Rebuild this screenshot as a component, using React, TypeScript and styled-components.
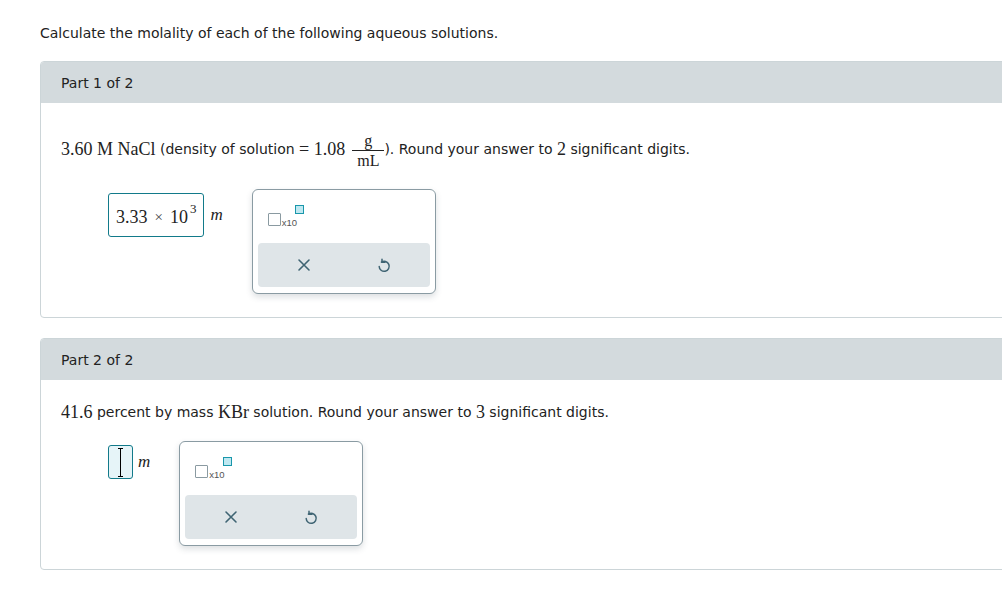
import React from "react";
import styled, { createGlobalStyle } from "styled-components";

const colors = {
  text: "#222",
  header: "#d3dadd",
  border: "#ccd5d8",
  teal: "#127a8a",
  icon: "#3f6473",
  paletteBorder: "#8a9ba3",
  bar: "#dfe5e8",
};

const GlobalStyle = createGlobalStyle`
  html, body {
    margin: 0;
    padding: 0;
    background: #fff;
  }
  body {
    font-family: "DejaVu Sans", Verdana, sans-serif;
    font-size: 14px;
    color: ${colors.text};
    overflow: hidden;
  }
`;

const Page = styled.div`
  width: 1002px;
  height: 598px;
  padding: 24px 0 0 40px;
  box-sizing: border-box;
  overflow: hidden;
`;

const Title = styled.p`
  margin: 0 0 19px;
  line-height: 18px;
`;

const Part = styled.section`
  width: 1000px;
  border: 1px solid ${colors.border};
  border-radius: 4px;
  overflow: hidden;
  margin-bottom: 20px;
`;

const PartHeader = styled.div`
  height: 41px;
  background: ${colors.header};
  display: flex;
  align-items: center;
  padding-left: 20px;
`;

const PartBody = styled.div<{ $top: number; $gap: number }>`
  padding: ${(p) => p.$top}px 20px 23px;
  display: flex;
  flex-direction: column;
  gap: ${(p) => p.$gap}px;
`;

const Question = styled.div`
  line-height: 20px;
  display: flex;
  align-items: center;
  white-space: pre;
`;

const Math = styled.span`
  font-family: "Liberation Serif", "Times New Roman", serif;
  font-size: 18px;
`;

const Fraction = styled.span`
  display: inline-flex;
  flex-direction: column;
  align-items: center;
  margin: 0 0 0 7px;
  font-family: "Liberation Serif", "Times New Roman", serif;
  position: relative;
  top: 2px;
`;

const Numer = styled.span`
  font-size: 16px;
  line-height: 18px;
  padding: 0 5px;
`;

const Denom = styled.span`
  font-size: 16px;
  line-height: 18px;
  padding: 1px 5px 0;
  border-top: 1px solid ${colors.text};
`;

const AnswerRow = styled.div`
  display: flex;
  align-items: flex-start;
  padding-left: 47px;
`;

const Field = styled.div`
  display: flex;
  align-items: center;
  margin-top: 4px;
  margin-right: 29px;
`;

const InputBox = styled.div<{ $active?: boolean }>`
  box-sizing: border-box;
  height: ${(p) => (p.$active ? 34 : 44)}px;
  min-width: 25px;
  padding: 0 ${(p) => (p.$active ? 0 : 7)}px;
  border: 1px solid ${colors.teal};
  border-radius: 3px;
  background: ${(p) => (p.$active ? "#e6f4f8" : "#fff")};
  display: flex;
  align-items: center;
  justify-content: center;
  font-family: "Liberation Serif", "Times New Roman", serif;
  font-size: 18px;
  line-height: 20px;
  padding-top: ${(p) => (p.$active ? 0 : 4)}px;
`;

const Times = styled.span`
  font-size: 15px;
  margin: 0 7px;
  color: #444;
`;

const Sup = styled.span`
  font-size: 13px;
  line-height: 13px;
  align-self: flex-start;
  margin-top: 4px;
  margin-left: 2px;
`;

const Cursor = styled.span`
  width: 5px;
  height: 29px;
  border-top: 1px solid #000;
  border-bottom: 1px solid #000;
  position: relative;
  box-sizing: border-box;

  &::after {
    content: "";
    position: absolute;
    left: 2px;
    top: 0;
    bottom: 0;
    width: 1px;
    background: #000;
  }
`;

const Unit = styled.span<{ $gap: number }>`
  font-family: "Liberation Serif", "Times New Roman", serif;
  font-style: italic;
  font-size: 17px;
  margin-left: ${(p) => p.$gap}px;
`;

const Palette = styled.div`
  box-sizing: border-box;
  width: 184px;
  height: 105px;
  border: 1px solid ${colors.paletteBorder};
  border-radius: 6px;
  box-shadow: 0 3px 6px rgba(60, 80, 90, 0.18);
  background: #fff;
  padding: 15px 5px 5px 5px;
  display: flex;
  flex-direction: column;
  gap: 17px;
`;

const SciButton = styled.div`
  display: flex;
  align-items: flex-end;
  height: 21px;
  padding-left: 10px;
`;

const BaseSquare = styled.span`
  width: 13px;
  height: 13px;
  box-sizing: border-box;
  border: 1.5px solid #8a9aa1;
  border-radius: 1px;
`;

const Ten = styled.span`
  font-family: "Liberation Sans", Arial, sans-serif;
  font-size: 9.5px;
  line-height: 9px;
  color: #555;
  margin-left: 1px;
  margin-bottom: -1px;
`;

const ExpSquare = styled.span`
  width: 9px;
  height: 9px;
  box-sizing: border-box;
  border: 1.5px solid #1997ab;
  background: #bfe8f1;
  align-self: flex-start;
  margin-left: -2px;
`;

const ActionBar = styled.div`
  height: 44px;
  background: ${colors.bar};
  border-radius: 4px;
  display: flex;
  align-items: center;
  justify-content: space-around;
  padding: 0 6px;
`;

const IconButton = styled.span`
  display: flex;
  align-items: center;
  justify-content: center;
  width: 20px;
  height: 20px;
  color: ${colors.icon};
`;

const ClearIcon = () => (
  <svg width="14" height="14" viewBox="0 0 14 14" fill="none">
    <path d="M2 2 L12 12 M12 2 L2 12" stroke="currentColor" strokeWidth="1.6" strokeLinecap="round" />
  </svg>
);

const UndoIcon = () => (
  <svg width="14" height="15" viewBox="0 0 14 15" fill="none">
    <path
      d="M4.4 4.2 A5 5 0 1 1 2.2 8.4"
      stroke="currentColor"
      strokeWidth="1.5"
      strokeLinecap="round"
    />
    <path d="M5 1.2 V4.3 H8" stroke="currentColor" strokeWidth="1.5" strokeLinecap="round" strokeLinejoin="round" />
  </svg>
);

const ToolPalette = () => (
  <Palette>
    <SciButton>
      <BaseSquare />
      <Ten>x10</Ten>
      <ExpSquare />
    </SciButton>
    <ActionBar>
      <IconButton>
        <ClearIcon />
      </IconButton>
      <IconButton>
        <UndoIcon />
      </IconButton>
    </ActionBar>
  </Palette>
);

const App = () => (
  <>
    <GlobalStyle />
    <Page>
      <Title>Calculate the molality of each of the following aqueous solutions.</Title>

      <Part>
        <PartHeader>Part 1 of 2</PartHeader>
        <PartBody $top={27} $gap={21}>
          <Question>
            <Math>3.60 M NaCl</Math>
            {" (density of solution "}
            <Math>= 1.08</Math>
            <Fraction>
              <Numer>g</Numer>
              <Denom>mL</Denom>
            </Fraction>
            {"). Round your answer to "}
            <Math>2</Math>
            {" significant digits."}
          </Question>
          <AnswerRow>
            <Field>
              <InputBox>
                3.33<Times>×</Times>10<Sup>3</Sup>
              </InputBox>
              <Unit $gap={6}>m</Unit>
            </Field>
            <ToolPalette />
          </AnswerRow>
        </PartBody>
      </Part>

      <Part>
        <PartHeader>Part 2 of 2</PartHeader>
        <PartBody $top={22} $gap={19}>
          <Question>
            <Math>41.6</Math>
            {" percent by mass "}
            <Math>KBr</Math>
            {" solution. Round your answer to "}
            <Math>3</Math>
            {" significant digits."}
          </Question>
          <AnswerRow>
            <Field>
              <InputBox $active>
                <Cursor />
              </InputBox>
              <Unit $gap={5}>m</Unit>
            </Field>
            <ToolPalette />
          </AnswerRow>
        </PartBody>
      </Part>
    </Page>
  </>
);

export default App;
